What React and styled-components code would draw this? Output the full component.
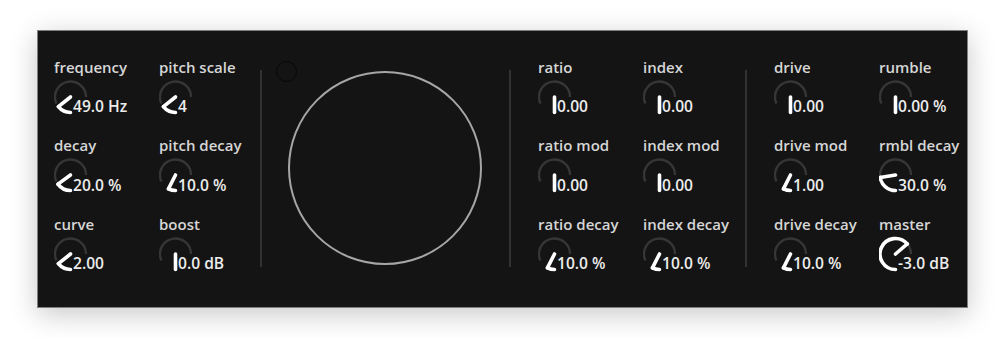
import React from "react";
import styled, { createGlobalStyle } from "styled-components";

const GlobalStyle = createGlobalStyle`
  body {
    margin: 0;
    background: #ffffff;
    font-family: "Open Sans", "Liberation Sans", sans-serif;
  }
`;

const Page = styled.div`
  padding: 30px 37px;
`;

const Panel = styled.div`
  display: flex;
  align-items: flex-start;
  width: 931px;
  height: 278px;
  box-sizing: border-box;
  padding: 26.8px 0 0 16px;
  background: #141414;
  border: 1px solid #7f7f7f;
  box-shadow: 0 6px 26px rgba(0, 0, 0, 0.22);
`;

const Section = styled.div`
  display: grid;
  grid-template-columns: 105px 1fr;
  grid-template-rows: repeat(3, 59px);
  row-gap: 19.5px;
  box-sizing: border-box;
  width: ${(p) => p.$width}px;
  padding-left: ${(p) => p.$pad || 0}px;
`;

const Divider = styled.div`
  width: 2px;
  height: 197px;
  margin-top: 12.2px;
  background: #323232;
`;

const Middle = styled.div`
  position: relative;
  width: 247px;
`;

const Scope = styled.div`
  width: 194px;
  height: 194px;
  box-sizing: border-box;
  margin: 13.2px 0 0 25.5px;
  border: 2px solid #a6a6a6;
  border-radius: 50%;
`;

const Toggle = styled.div`
  position: absolute;
  left: 14px;
  top: 3.2px;
  width: 21px;
  height: 21px;
  box-sizing: border-box;
  border: 1.5px solid #070707;
  border-radius: 50%;
`;

const Cell = styled.div`
  display: flex;
  flex-direction: column;
`;

const Label = styled.div`
  font-size: 15px;
  font-weight: 600;
  line-height: 18px;
  color: #d6d6d6;
  white-space: nowrap;
`;

const Dial = styled.div`
  position: relative;
  height: 40px;
  margin-top: 0.8px;
`;

const Value = styled.div`
  position: absolute;
  left: 19px;
  top: 19.9px;
  font-size: 15.6px;
  font-weight: 600;
  line-height: 20px;
  color: #ececec;
  white-space: nowrap;
`;

const CX = 16.5;
const CY = 20;
const R = 15.5;

const pt = (deg) => {
  const a = (deg * Math.PI) / 180;
  return [CX - R * Math.sin(a), CY + R * Math.cos(a)];
};

const arc = (from, to) => {
  const [x1, y1] = pt(from);
  const [x2, y2] = pt(to);
  const large = to - from > 180 ? 1 : 0;
  return `M ${x1} ${y1} A ${R} ${R} 0 ${large} 1 ${x2} ${y2}`;
};

const Knob = ({ label, value, f }) => {
  const deg = f * 270;
  const [nx, ny] = pt(deg);
  return (
    <Cell>
      <Label>{label}</Label>
      <Dial>
        <svg width="40" height="40">
          <path d={arc(Math.max(65, deg), 270)} fill="none" stroke="#363636" strokeWidth="2.4" />
          {deg > 0 && (
            <path d={arc(0, deg)} fill="none" stroke="#ffffff" strokeWidth="3.6" strokeLinecap="round" />
          )}
          <line x1={CX} y1={CY} x2={nx} y2={ny} stroke="#ffffff" strokeWidth="3.6" strokeLinecap="round" />
        </svg>
        <Value>{value}</Value>
      </Dial>
    </Cell>
  );
};

const left = [
  ["frequency", "49.0 Hz", 0.19],
  ["pitch scale", "4", 0.19],
  ["decay", "20.0 %", 0.2],
  ["pitch decay", "10.0 %", 0.1],
  ["curve", "2.00", 0.19],
  ["boost", "0.0 dB", 0],
];

const fm = [
  ["ratio", "0.00", 0],
  ["index", "0.00", 0],
  ["ratio mod", "0.00", 0],
  ["index mod", "0.00", 0],
  ["ratio decay", "10.0 %", 0.1],
  ["index decay", "10.0 %", 0.1],
];

const out = [
  ["drive", "0.00", 0],
  ["rumble", "0.00 %", 0],
  ["drive mod", "1.00", 0.1],
  ["rmbl decay", "30.0 %", 0.3],
  ["drive decay", "10.0 %", 0.1],
  ["master", "-3.0 dB", 0.85],
];

const renderKnobs = (list) =>
  list.map(([label, value, f]) => <Knob key={label} label={label} value={value} f={f} />);

export default function App() {
  return (
    <>
      <GlobalStyle />
      <Page>
        <Panel>
          <Section $width={206}>{renderKnobs(left)}</Section>
          <Divider />
          <Middle>
            <Toggle />
            <Scope />
          </Middle>
          <Divider />
          <Section $width={234} $pad={27}>{renderKnobs(fm)}</Section>
          <Divider />
          <Section $width={194} $pad={27}>{renderKnobs(out)}</Section>
        </Panel>
      </Page>
    </>
  );
}
